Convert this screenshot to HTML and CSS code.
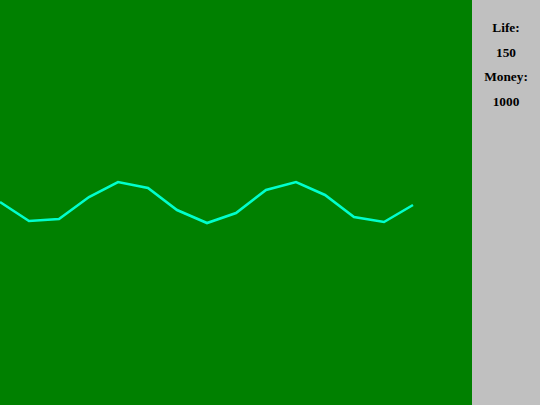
FILE: index.html
```html
<!DOCTYPE html>
<html>
<head>
<meta charset="utf-8">
<link rel="stylesheet" href="styles.css">
</head>
<body>
<div class="game">
  <div class="field">
    <svg class="path" width="472" height="405" viewBox="0 0 472 405">
      <polyline points="0,202 29,221 59,219 89,197 118,182 148,188 177,210 207,223 236,213 266,190 296,182 325,195 354,217 384,222 413,205" fill="none" stroke="#00ffcc" stroke-width="2.6" stroke-linejoin="miter"/>
    </svg>
  </div>
  <div class="side">
    <div class="stat">Life:</div>
    <div class="stat">150</div>
    <div class="stat">Money:</div>
    <div class="stat">1000</div>
  </div>
</div>
</body>
</html>
```
FILE: styles.css
```css
html, body {
  margin: 0;
  padding: 0;
}
.game {
  display: flex;
  width: 540px;
  height: 405px;
}
.field {
  width: 472px;
  height: 405px;
  background: #008000;
}
.path {
  display: block;
}
.side {
  flex: 1;
  background: #c0c0c0;
  padding-top: 16px;
  font-family: "Liberation Serif", serif;
  font-weight: bold;
  font-size: 13.33px;
  text-align: center;
  color: #000;
}
.stat {
  line-height: 24.5px;
}
```
